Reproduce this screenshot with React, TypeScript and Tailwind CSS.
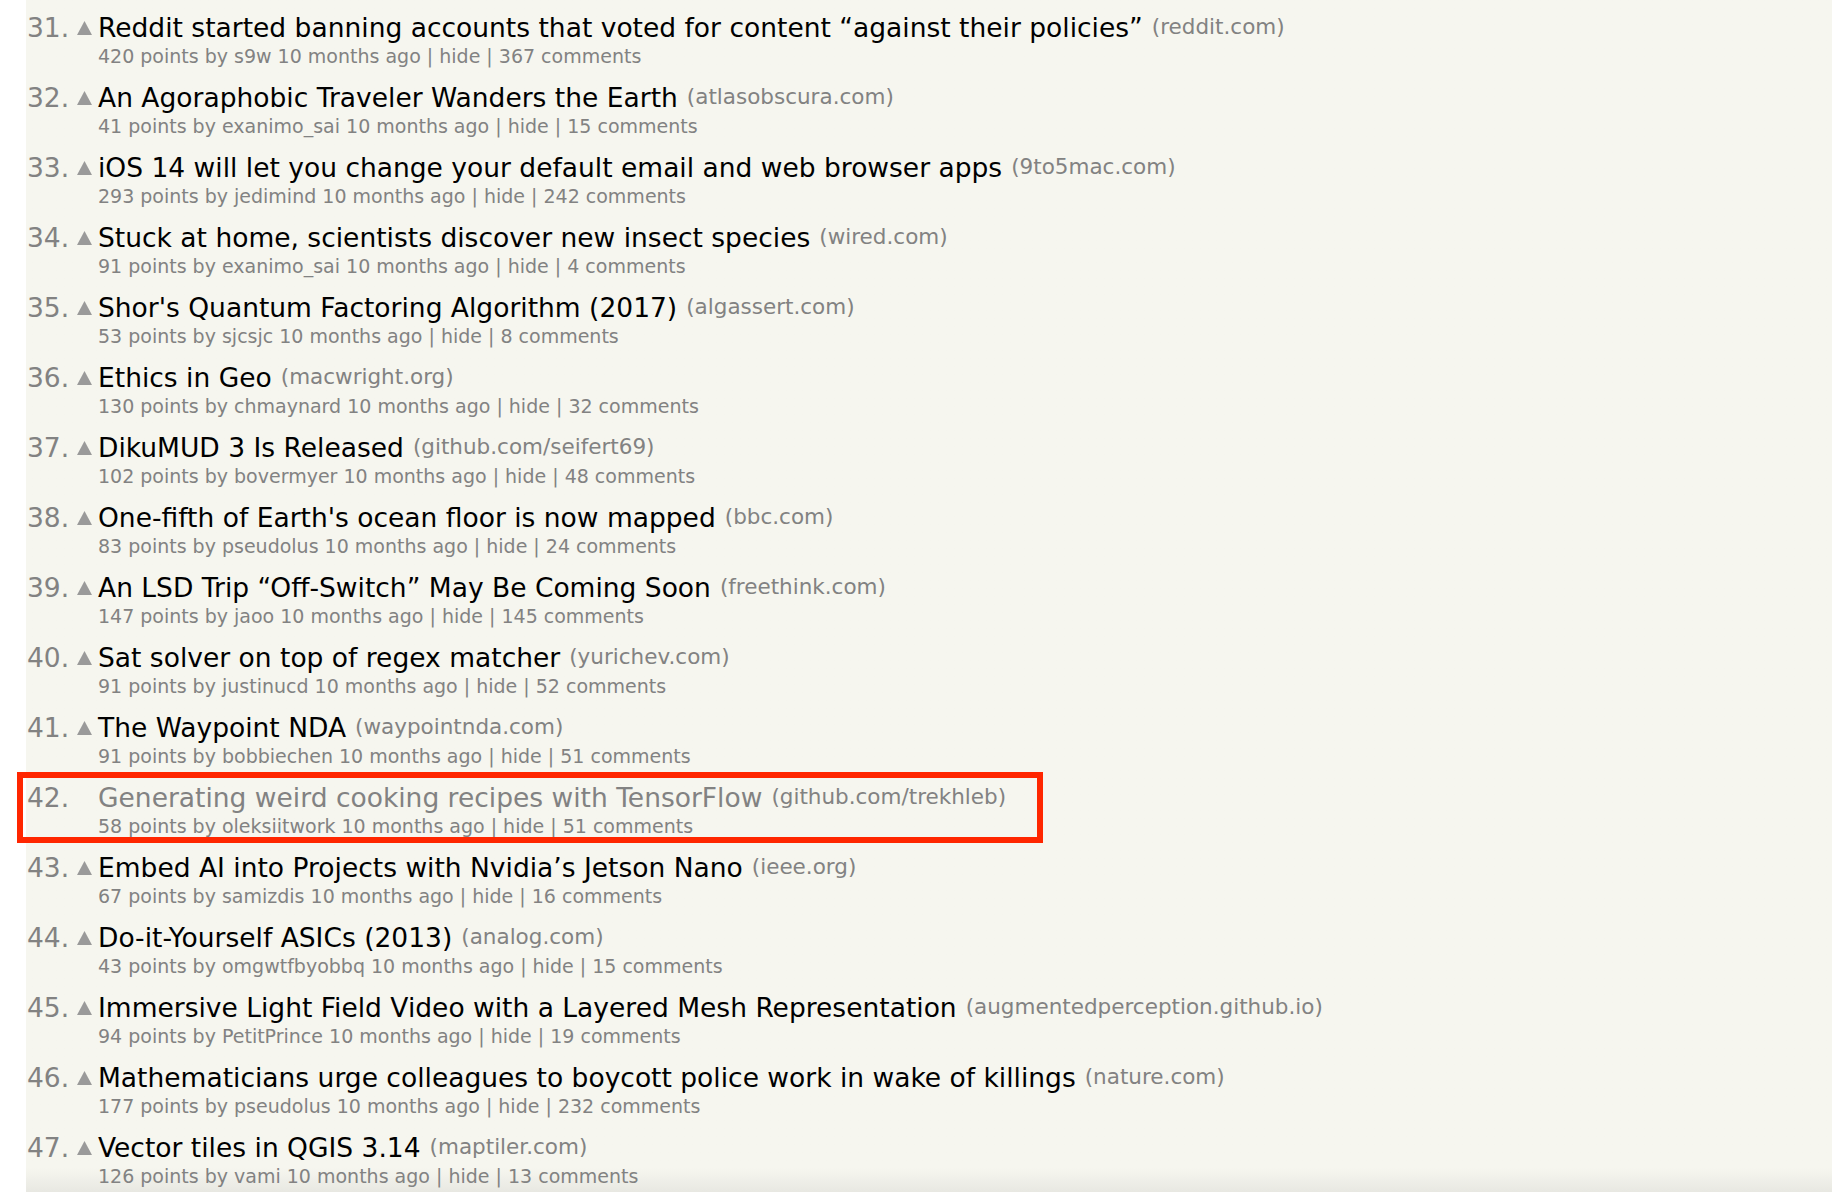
import React from 'react'

type Story = {
  rank: number
  title: string
  site: string
  points: number
  user: string
  comments: number
  visited?: boolean
}

const stories: Story[] = [
  { rank: 31, title: 'Reddit started banning accounts that voted for content “against their policies”', site: 'reddit.com', points: 420, user: 's9w', comments: 367 },
  { rank: 32, title: 'An Agoraphobic Traveler Wanders the Earth', site: 'atlasobscura.com', points: 41, user: 'exanimo_sai', comments: 15 },
  { rank: 33, title: 'iOS 14 will let you change your default email and web browser apps', site: '9to5mac.com', points: 293, user: 'jedimind', comments: 242 },
  { rank: 34, title: 'Stuck at home, scientists discover new insect species', site: 'wired.com', points: 91, user: 'exanimo_sai', comments: 4 },
  { rank: 35, title: "Shor's Quantum Factoring Algorithm (2017)", site: 'algassert.com', points: 53, user: 'sjcsjc', comments: 8 },
  { rank: 36, title: 'Ethics in Geo', site: 'macwright.org', points: 130, user: 'chmaynard', comments: 32 },
  { rank: 37, title: 'DikuMUD 3 Is Released', site: 'github.com/seifert69', points: 102, user: 'bovermyer', comments: 48 },
  { rank: 38, title: "One-fifth of Earth's ocean floor is now mapped", site: 'bbc.com', points: 83, user: 'pseudolus', comments: 24 },
  { rank: 39, title: 'An LSD Trip “Off-Switch” May Be Coming Soon', site: 'freethink.com', points: 147, user: 'jaoo', comments: 145 },
  { rank: 40, title: 'Sat solver on top of regex matcher', site: 'yurichev.com', points: 91, user: 'justinucd', comments: 52 },
  { rank: 41, title: 'The Waypoint NDA', site: 'waypointnda.com', points: 91, user: 'bobbiechen', comments: 51 },
  { rank: 42, title: 'Generating weird cooking recipes with TensorFlow', site: 'github.com/trekhleb', points: 58, user: 'oleksiitwork', comments: 51, visited: true },
  { rank: 43, title: 'Embed AI into Projects with Nvidia’s Jetson Nano', site: 'ieee.org', points: 67, user: 'samizdis', comments: 16 },
  { rank: 44, title: 'Do-it-Yourself ASICs (2013)', site: 'analog.com', points: 43, user: 'omgwtfbyobbq', comments: 15 },
  { rank: 45, title: 'Immersive Light Field Video with a Layered Mesh Representation', site: 'augmentedperception.github.io', points: 94, user: 'PetitPrince', comments: 19 },
  { rank: 46, title: 'Mathematicians urge colleagues to boycott police work in wake of killings', site: 'nature.com', points: 177, user: 'pseudolus', comments: 232 },
  { rank: 47, title: 'Vector tiles in QGIS 3.14', site: 'maptiler.com', points: 126, user: 'vami', comments: 13 },
]

function VoteArrow({ hidden }: { hidden?: boolean }) {
  return (
    <span className="w-[24px] pl-[3px] flex items-center">
      {!hidden && (
        <svg width="15" height="14" viewBox="0 0 15 14">
          <path d="M7.5 0L15 14H0z" fill="#9a9a9a" />
        </svg>
      )}
    </span>
  )
}

function StoryRow({ story }: { story: Story }) {
  return (
    <div className="relative h-[70px] flex flex-col">
      {/* highlight box drawn over the row */}
      {story.visited && (
        <span className="absolute left-[-10px] top-[-8px] w-[1026px] h-[71px] border-[6px] border-[#ff2600]" />
      )}
      <div className="flex items-center h-[35px]">
        <span className="w-[47px] text-[#828282] text-[26.5px]">{story.rank}.</span>
        <VoteArrow hidden={story.visited} />
        <span className={`text-[26.5px] whitespace-nowrap ${story.visited ? 'text-[#828282]' : 'text-black'}`}>
          {story.title}
        </span>
        <span className="ml-[9px] text-[21.5px] text-[#828282] whitespace-nowrap">({story.site})</span>
      </div>
      <div className="pl-[71px] h-[22px] flex items-center text-[19px] text-[#828282] whitespace-nowrap">
        {story.points} points by {story.user} 10 months ago | hide | {story.comments} comments
      </div>
    </div>
  )
}

export default function App() {
  return (
    <div className="w-[1832px] h-[1192px] bg-white overflow-hidden" style={{ fontFamily: '"DejaVu Sans", Verdana, sans-serif' }}>
      <div className="ml-[26px] h-full pt-[10px] pl-[1px] bg-gradient-to-b from-[#f6f6ef] from-[98%] to-[#e8e8e2]">
        {stories.map((s) => (
          <StoryRow key={s.rank} story={s} />
        ))}
      </div>
    </div>
  )
}
